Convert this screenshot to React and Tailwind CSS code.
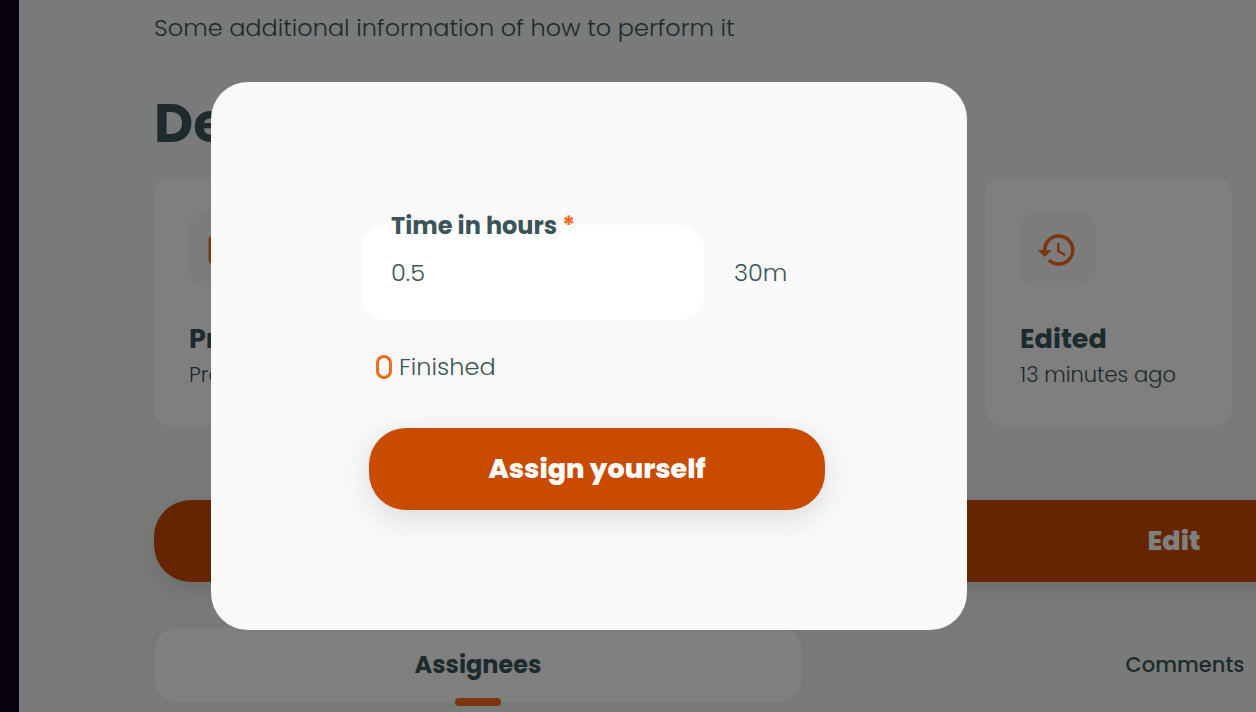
import { MdHistory, MdOutlineFolder } from "react-icons/md";

function InfoCard({ icon: Icon, title, text, className = "" }) {
  return (
    <article className={`flex h-[247px] flex-col rounded-2xl bg-white px-[35px] pt-[34px] ${className}`}>
      <div className="flex size-[75px] shrink-0 items-center justify-center rounded-2xl bg-[#f9f9f9] pr-[2px] text-[#f86a1f]">
        <Icon size={42} aria-hidden="true" />
      </div>
      <h3 className="mt-8 text-[27px] leading-10 font-bold">{title}</h3>
      <p className="text-[21px] leading-8 font-light whitespace-nowrap">{text}</p>
    </article>
  );
}

function PrimaryButton({ children, className = "", ...props }) {
  return (
    <button
      className={`h-[82px] rounded-[37px] bg-[#c94b00] text-[27px] font-extrabold text-white shadow-[0_8px_30px_rgba(0,0,0,0.12)] ${className}`}
      {...props}
    >
      {children}
    </button>
  );
}

function TaskPage() {
  return (
    <div className="flex h-full overflow-hidden bg-[#f3f7f4]">
      <aside className="w-[19px] shrink-0 bg-[#10001e]" />
      <main className="min-w-[1490px] flex-1 pt-2 pl-[135px]">
        <p className="text-2xl leading-10 font-light">Some additional information of how to perform it</p>
        <h2 className="mt-9 text-[54px] leading-[78px] font-bold">Details</h2>
        <section className="mt-4 grid grid-cols-[repeat(5,247px)] gap-[30px]">
          <InfoCard icon={MdOutlineFolder} title="Project" text="Project" />
          <InfoCard icon={MdHistory} title="Edited" text="13 minutes ago" className="col-start-4" />
        </section>
        <div className="mt-[75px] grid grid-cols-2 gap-[15px]">
          <PrimaryButton type="button">Assign yourself</PrimaryButton>
          <PrimaryButton type="button">Edit</PrimaryButton>
        </div>
        <div role="tablist" className="mt-[45px] grid grid-cols-2 gap-[59px]">
          <button
            type="button"
            role="tab"
            aria-selected="true"
            className="relative h-[75px] rounded-3xl bg-white text-2xl font-bold shadow-[0_0_8px_rgba(60,84,89,0.06)]"
          >
            Assignees
            <span className="absolute -bottom-1 left-1/2 h-2 w-[46px] -translate-x-1/2 rounded-full bg-[#f86a1f]" />
          </button>
          <button type="button" role="tab" aria-selected="false" className="h-[75px] text-[21px] font-medium">
            Comments
          </button>
        </div>
      </main>
    </div>
  );
}

function AssignDialog() {
  return (
    <div className="fixed inset-0 flex items-center justify-center bg-black/50 pr-[78px]">
      <form
        role="dialog"
        aria-modal="true"
        aria-label="Assign yourself"
        className="w-full max-w-[756px] rounded-[37px] bg-[#f9f9f9] px-[150px] pt-[143px] pb-[120px]"
      >
        <div className="flex items-center gap-[30px]">
          <div className="relative w-[343px]">
            <label htmlFor="hours" className="absolute -top-[19px] left-[30px] text-2xl leading-10 font-bold">
              Time in hours <span className="text-[#f86a1f]">*</span>
            </label>
            <input
              id="hours"
              type="text"
              inputMode="decimal"
              defaultValue="0.5"
              className="h-[95px] w-full rounded-3xl bg-white px-[30px] text-2xl font-light outline-none"
            />
          </div>
          <output htmlFor="hours" className="text-2xl font-light">30m</output>
        </div>
        <div className="mt-[27px] flex items-center gap-[7px] pl-[15px]">
          <input
            id="finished"
            type="checkbox"
            className="h-6 w-4 appearance-none rounded-lg border-3 border-[#f26b1d] checked:bg-[#f26b1d]"
          />
          <label htmlFor="finished" className="text-2xl leading-10 font-light">Finished</label>
        </div>
        <PrimaryButton type="button" className="mt-[41px] ml-2 w-full">
          Assign yourself
        </PrimaryButton>
      </form>
    </div>
  );
}

export default function App() {
  return (
    <div className="h-screen overflow-hidden font-[Poppins,Inter,sans-serif] text-[#3c5459]">
      <TaskPage />
      <AssignDialog />
    </div>
  );
}
